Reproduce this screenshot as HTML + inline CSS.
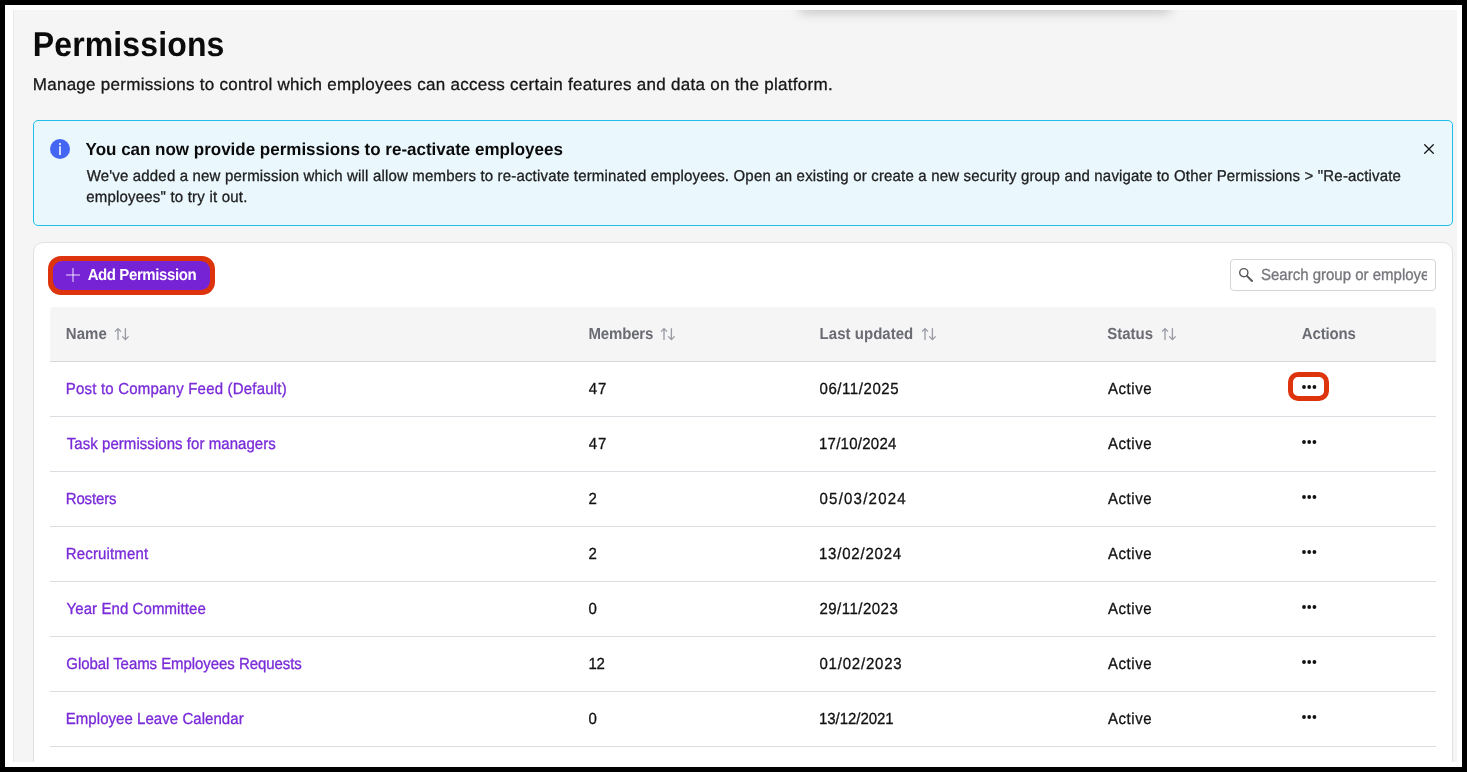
<!DOCTYPE html>
<html><head><meta charset="utf-8">
<style>
*{box-sizing:border-box;margin:0;padding:0}
html,body{width:1467px;height:772px;overflow:hidden;background:#000;font-family:"Liberation Sans",sans-serif;color:#1a1a1a}
.abs{position:absolute}
.t{position:absolute;white-space:nowrap;backface-visibility:hidden;text-rendering:geometricPrecision}
.r{-webkit-text-stroke:0.3px currentColor}
</style></head>
<body>
<div class="abs" style="left:5px;top:5px;width:1457px;height:762px;background:#fff"></div>
<div class="abs" style="left:13px;top:10px;width:1444px;height:752px;background:#f5f5f5;border-left:1px solid #ebebeb;overflow:hidden">
  <div class="abs" style="left:786px;top:-20px;width:370px;height:20px;background:#fff;box-shadow:0 3px 12px rgba(0,0,0,0.2)"></div>
</div>
<div class="abs" style="left:0;top:0;width:1457px;height:762px;overflow:hidden">
<div class="t" id="title" style="left:32.80px;top:24.73px;font-size:32px;line-height:40px;letter-spacing:0.125px;transform:scaleY(1.0800);transform-origin:0 31.09px;font-weight:700;color:#0b0b0b">Permissions</div>
<div class="t r" id="sub" style="left:32.71px;top:75.01px;font-size:17px;line-height:20px;letter-spacing:0.285px;transform:scaleY(1.0000);transform-origin:0 15.89px;color:#161616">Manage permissions to control which employees can access certain features and data on the platform.</div>
<div class="abs" style="left:33px;top:120px;width:1420px;height:106px;background:#eaf7fd;border:1px solid #1fbeeb;border-radius:5px"></div>
<svg class="abs" style="left:50px;top:139px" width="20" height="20" viewBox="0 0 20 20"><circle cx="10" cy="10" r="10" fill="#4466f2"/><rect x="9" y="4" width="2" height="2" fill="#d6ddfc"/><rect x="9" y="7.2" width="2" height="8.8" fill="#d6ddfc"/></svg>
<div class="t" id="btitle" style="left:85.61px;top:140.01px;font-size:17px;line-height:20px;letter-spacing:-0.009px;transform:scaleY(1.0200);transform-origin:0 15.89px;font-weight:700;color:#0b0b0b">You can now provide permissions to re-activate employees</div>
<div class="t r" id="body1" style="left:86.70px;top:165.61px;font-size:15px;line-height:22px;letter-spacing:0.172px;transform:scaleY(1.0400);transform-origin:0 16.20px;color:#1e1e1e">We&#39;ve added a new permission which will allow members to re-activate terminated employees. Open an existing or create a new security group and navigate to Other Permissions &gt; "Re-activate</div>
<div class="t r" id="body2" style="left:86.16px;top:187.33px;font-size:15px;line-height:22px;letter-spacing:0.205px;transform:scaleY(1.0400);transform-origin:0 16.20px;color:#1e1e1e">employees" to try it out.</div>
<svg class="abs" style="left:1422px;top:142px" width="14" height="14" viewBox="0 0 14 14"><path d="M2.7 2.7L11.3 11.3M11.3 2.7L2.7 11.3" stroke="#151515" stroke-width="1.3" stroke-linecap="round"/></svg>
<div class="abs" style="left:33px;top:242px;width:1420px;height:560px;background:#fff;border:1px solid #e0e0e6;border-radius:10px"></div>
<div class="abs" style="left:48px;top:256px;width:167px;height:39px;background:#dd340d;border-radius:13px"></div>
<div class="abs" style="left:53px;top:261px;width:157px;height:29px;background:#7623d6;border-radius:9px"></div>
<svg class="abs" style="left:65px;top:267px" width="16" height="16" viewBox="0 0 16 16"><path d="M8 1V15" stroke="#fff" stroke-opacity="0.62" stroke-width="1.4"/><path d="M1 8H15" stroke="#fff" stroke-opacity="0.62" stroke-width="1.4"/></svg>
<div class="t" id="addp" style="left:87.64px;top:266.48px;font-size:15px;line-height:20px;letter-spacing:-0.403px;transform:scaleY(1.0700);transform-origin:0 15.20px;font-weight:700;color:#fff">Add Permission</div>
<div class="abs" style="left:1230px;top:259px;width:206px;height:32px;background:#fff;border:1px solid #d4d4da;border-radius:4px"></div>
<svg class="abs" style="left:1238px;top:267px" width="16" height="16" viewBox="0 0 16 16"><circle cx="5.8" cy="5.7" r="4.1" fill="none" stroke="#58585c" stroke-width="1.4"/><path d="M8.9 8.9L14 14" stroke="#58585c" stroke-width="2" stroke-linecap="round"/></svg>
<div class="abs" style="left:1261px;top:262px;width:166px;height:26px;overflow:hidden"><div class="t r" style="left:0px;top:3.90px;font-size:15px;line-height:20px;color:#76767c;transform:scaleY(1.07);transform-origin:0 15.20px">Search group or employee</div></div>
<div class="abs" style="left:50px;top:307px;width:1386px;height:55px;background:#f5f5f5;border-bottom:1px solid #d5d5dc;border-radius:4px 4px 0 0"></div>
<div class="t" id="h_name" style="left:65.83px;top:325.48px;font-size:15px;line-height:20px;letter-spacing:0.040px;transform:scaleY(1.0700);transform-origin:0 15.20px;font-weight:700;color:#6b6c73">Name</div>
<div class="t" id="h_mem" style="left:588.55px;top:325.48px;font-size:15px;line-height:20px;letter-spacing:-0.177px;transform:scaleY(1.0700);transform-origin:0 15.20px;font-weight:700;color:#6b6c73">Members</div>
<div class="t" id="h_last" style="left:819.62px;top:325.48px;font-size:15px;line-height:20px;letter-spacing:0.027px;transform:scaleY(1.0700);transform-origin:0 15.20px;font-weight:700;color:#6b6c73">Last updated</div>
<div class="t" id="h_stat" style="left:1107.22px;top:324.82px;font-size:15px;line-height:20px;letter-spacing:-0.011px;transform:scaleY(1.0700);transform-origin:0 15.20px;font-weight:700;color:#6b6c73">Status</div>
<div class="t" id="h_act" style="left:1301.77px;top:325.48px;font-size:15px;line-height:20px;letter-spacing:-0.157px;transform:scaleY(1.0700);transform-origin:0 15.20px;font-weight:700;color:#6b6c73">Actions</div>
<svg class="abs" style="left:114px;top:327px" width="16" height="14" viewBox="0 0 16 14"><path d="M4 13V1.6M1 4.6L4 1.6L7 4.6M11.4 1.2V12.6M8.2 9.4L11.4 12.6L14.6 9.4" fill="none" stroke="#9799a3" stroke-width="1.3"/></svg>
<svg class="abs" style="left:660px;top:327px" width="16" height="14" viewBox="0 0 16 14"><path d="M4 13V1.6M1 4.6L4 1.6L7 4.6M11.4 1.2V12.6M8.2 9.4L11.4 12.6L14.6 9.4" fill="none" stroke="#9799a3" stroke-width="1.3"/></svg>
<svg class="abs" style="left:921px;top:327px" width="16" height="14" viewBox="0 0 16 14"><path d="M4 13V1.6M1 4.6L4 1.6L7 4.6M11.4 1.2V12.6M8.2 9.4L11.4 12.6L14.6 9.4" fill="none" stroke="#9799a3" stroke-width="1.3"/></svg>
<svg class="abs" style="left:1161px;top:327px" width="16" height="14" viewBox="0 0 16 14"><path d="M4 13V1.6M1 4.6L4 1.6L7 4.6M11.4 1.2V12.6M8.2 9.4L11.4 12.6L14.6 9.4" fill="none" stroke="#9799a3" stroke-width="1.3"/></svg>
<div class="t r" id="r0_name" style="left:65.78px;top:379.63px;font-size:15px;line-height:20px;letter-spacing:0.202px;transform:scaleY(1.0700);transform-origin:0 15.20px;color:#7a2bd8">Post to Company Feed (Default)</div>
<div class="t r" id="r0_mem" style="left:588.81px;top:379.70px;font-size:15px;line-height:20px;letter-spacing:0.825px;transform:scaleY(1.0700);transform-origin:0 15.20px;color:#121212">47</div>
<div class="t r" id="r0_date" style="left:819.49px;top:380.34px;font-size:15px;line-height:20px;letter-spacing:0.573px;transform:scaleY(1.0700);transform-origin:0 15.20px;color:#121212">06/11/2025</div>
<div class="t r" id="r0_stat" style="left:1107.89px;top:380.03px;font-size:15px;line-height:20px;letter-spacing:0.594px;transform:scaleY(1.0700);transform-origin:0 15.20px;color:#121212">Active</div>
<svg class="abs" style="left:1300px;top:384px" width="18" height="6" viewBox="0 0 18 6"><circle cx="4" cy="3" r="1.9" fill="#111"/><circle cx="9.2" cy="3" r="1.9" fill="#111"/><circle cx="14.4" cy="3" r="1.9" fill="#111"/></svg>
<div class="abs" style="left:50px;top:416px;width:1386px;height:1px;background:#dcdce2"></div>
<div class="t r" id="r1_name" style="left:66.75px;top:435.09px;font-size:15px;line-height:20px;letter-spacing:0.051px;transform:scaleY(1.0700);transform-origin:0 15.20px;color:#7a2bd8">Task permissions for managers</div>
<div class="t r" id="r1_mem" style="left:588.81px;top:434.70px;font-size:15px;line-height:20px;letter-spacing:0.825px;transform:scaleY(1.0700);transform-origin:0 15.20px;color:#121212">47</div>
<div class="t r" id="r1_date" style="left:818.98px;top:435.48px;font-size:15px;line-height:20px;letter-spacing:0.256px;transform:scaleY(1.0700);transform-origin:0 15.20px;color:#121212">17/10/2024</div>
<div class="t r" id="r1_stat" style="left:1107.89px;top:435.03px;font-size:15px;line-height:20px;letter-spacing:0.594px;transform:scaleY(1.0700);transform-origin:0 15.20px;color:#121212">Active</div>
<svg class="abs" style="left:1300px;top:439px" width="18" height="6" viewBox="0 0 18 6"><circle cx="4" cy="3" r="1.9" fill="#111"/><circle cx="9.2" cy="3" r="1.9" fill="#111"/><circle cx="14.4" cy="3" r="1.9" fill="#111"/></svg>
<div class="abs" style="left:50px;top:471px;width:1386px;height:1px;background:#dcdce2"></div>
<div class="t r" id="r2_name" style="left:65.78px;top:489.62px;font-size:15px;line-height:20px;letter-spacing:-0.159px;transform:scaleY(1.0700);transform-origin:0 15.20px;color:#7a2bd8">Rosters</div>
<div class="t r" id="r2_mem" style="left:588.60px;top:490.48px;font-size:15px;line-height:20px;letter-spacing:0.000px;transform:scaleY(1.0700);transform-origin:0 15.20px;color:#121212">2</div>
<div class="t r" id="r2_date" style="left:819.49px;top:490.34px;font-size:15px;line-height:20px;letter-spacing:1.229px;transform:scaleY(1.0700);transform-origin:0 15.20px;color:#121212">05/03/2024</div>
<div class="t r" id="r2_stat" style="left:1107.89px;top:490.03px;font-size:15px;line-height:20px;letter-spacing:0.594px;transform:scaleY(1.0700);transform-origin:0 15.20px;color:#121212">Active</div>
<svg class="abs" style="left:1300px;top:494px" width="18" height="6" viewBox="0 0 18 6"><circle cx="4" cy="3" r="1.9" fill="#111"/><circle cx="9.2" cy="3" r="1.9" fill="#111"/><circle cx="14.4" cy="3" r="1.9" fill="#111"/></svg>
<div class="abs" style="left:50px;top:526px;width:1386px;height:1px;background:#dcdce2"></div>
<div class="t r" id="r3_name" style="left:65.78px;top:544.62px;font-size:15px;line-height:20px;letter-spacing:0.155px;transform:scaleY(1.0700);transform-origin:0 15.20px;color:#7a2bd8">Recruitment</div>
<div class="t r" id="r3_mem" style="left:588.60px;top:545.48px;font-size:15px;line-height:20px;letter-spacing:0.000px;transform:scaleY(1.0700);transform-origin:0 15.20px;color:#121212">2</div>
<div class="t r" id="r3_date" style="left:818.98px;top:545.48px;font-size:15px;line-height:20px;letter-spacing:0.785px;transform:scaleY(1.0700);transform-origin:0 15.20px;color:#121212">13/02/2024</div>
<div class="t r" id="r3_stat" style="left:1107.89px;top:545.03px;font-size:15px;line-height:20px;letter-spacing:0.594px;transform:scaleY(1.0700);transform-origin:0 15.20px;color:#121212">Active</div>
<svg class="abs" style="left:1300px;top:549px" width="18" height="6" viewBox="0 0 18 6"><circle cx="4" cy="3" r="1.9" fill="#111"/><circle cx="9.2" cy="3" r="1.9" fill="#111"/><circle cx="14.4" cy="3" r="1.9" fill="#111"/></svg>
<div class="abs" style="left:50px;top:581px;width:1386px;height:1px;background:#dcdce2"></div>
<div class="t r" id="r4_name" style="left:66.58px;top:600.03px;font-size:15px;line-height:20px;letter-spacing:0.076px;transform:scaleY(1.0700);transform-origin:0 15.20px;color:#7a2bd8">Year End Committee</div>
<div class="t r" id="r4_mem" style="left:588.58px;top:600.36px;font-size:15px;line-height:20px;letter-spacing:0.000px;transform:scaleY(1.0700);transform-origin:0 15.20px;color:#121212">0</div>
<div class="t r" id="r4_date" style="left:819.45px;top:600.48px;font-size:15px;line-height:20px;letter-spacing:0.489px;transform:scaleY(1.0700);transform-origin:0 15.20px;color:#121212">29/11/2023</div>
<div class="t r" id="r4_stat" style="left:1107.89px;top:600.03px;font-size:15px;line-height:20px;letter-spacing:0.594px;transform:scaleY(1.0700);transform-origin:0 15.20px;color:#121212">Active</div>
<svg class="abs" style="left:1300px;top:604px" width="18" height="6" viewBox="0 0 18 6"><circle cx="4" cy="3" r="1.9" fill="#111"/><circle cx="9.2" cy="3" r="1.9" fill="#111"/><circle cx="14.4" cy="3" r="1.9" fill="#111"/></svg>
<div class="abs" style="left:50px;top:636px;width:1386px;height:1px;background:#dcdce2"></div>
<div class="t r" id="r5_name" style="left:66.33px;top:654.87px;font-size:15px;line-height:20px;letter-spacing:-0.061px;transform:scaleY(1.0700);transform-origin:0 15.20px;color:#7a2bd8">Global Teams Employees Requests</div>
<div class="t r" id="r5_mem" style="left:588.51px;top:655.48px;font-size:15px;line-height:20px;letter-spacing:-0.300px;transform:scaleY(1.0700);transform-origin:0 15.20px;color:#121212">12</div>
<div class="t r" id="r5_date" style="left:819.49px;top:655.34px;font-size:15px;line-height:20px;letter-spacing:0.790px;transform:scaleY(1.0700);transform-origin:0 15.20px;color:#121212">01/02/2023</div>
<div class="t r" id="r5_stat" style="left:1107.89px;top:655.03px;font-size:15px;line-height:20px;letter-spacing:0.594px;transform:scaleY(1.0700);transform-origin:0 15.20px;color:#121212">Active</div>
<svg class="abs" style="left:1300px;top:659px" width="18" height="6" viewBox="0 0 18 6"><circle cx="4" cy="3" r="1.9" fill="#111"/><circle cx="9.2" cy="3" r="1.9" fill="#111"/><circle cx="14.4" cy="3" r="1.9" fill="#111"/></svg>
<div class="abs" style="left:50px;top:691px;width:1386px;height:1px;background:#dcdce2"></div>
<div class="t r" id="r6_name" style="left:65.78px;top:710.48px;font-size:15px;line-height:20px;letter-spacing:0.050px;transform:scaleY(1.0700);transform-origin:0 15.20px;color:#7a2bd8">Employee Leave Calendar</div>
<div class="t r" id="r6_mem" style="left:588.58px;top:710.36px;font-size:15px;line-height:20px;letter-spacing:0.000px;transform:scaleY(1.0700);transform-origin:0 15.20px;color:#121212">0</div>
<div class="t r" id="r6_date" style="left:818.98px;top:710.48px;font-size:15px;line-height:20px;letter-spacing:-0.042px;transform:scaleY(1.0700);transform-origin:0 15.20px;color:#121212">13/12/2021</div>
<div class="t r" id="r6_stat" style="left:1107.89px;top:710.03px;font-size:15px;line-height:20px;letter-spacing:0.594px;transform:scaleY(1.0700);transform-origin:0 15.20px;color:#121212">Active</div>
<svg class="abs" style="left:1300px;top:714px" width="18" height="6" viewBox="0 0 18 6"><circle cx="4" cy="3" r="1.9" fill="#111"/><circle cx="9.2" cy="3" r="1.9" fill="#111"/><circle cx="14.4" cy="3" r="1.9" fill="#111"/></svg>
<div class="abs" style="left:50px;top:746px;width:1386px;height:1px;background:#dcdce2"></div>
<div class="abs" style="left:1288px;top:372px;width:41px;height:29px;border:5px solid #dd340d;border-radius:10px"></div>
</div></body></html>
